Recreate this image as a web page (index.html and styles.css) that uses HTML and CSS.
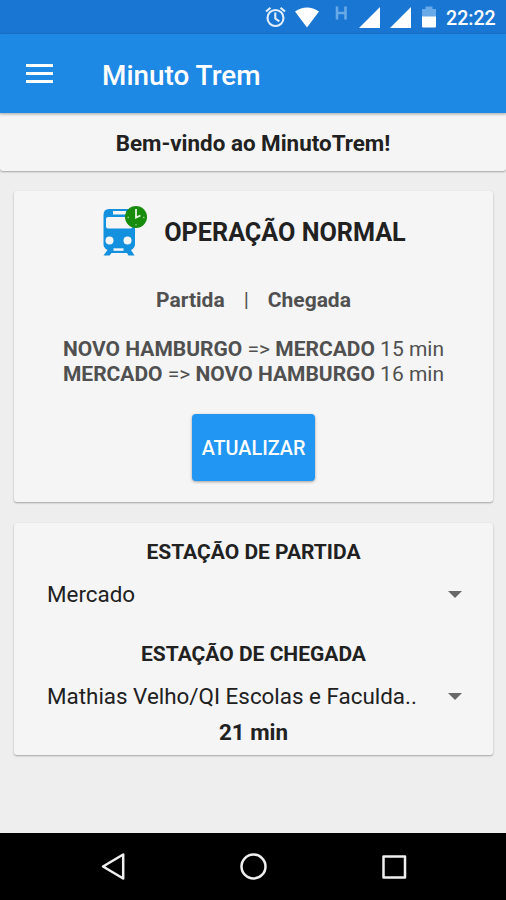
FILE: index.html
```html
<!DOCTYPE html>
<html lang="pt-BR">
<head>
<meta charset="utf-8">
<title>Minuto Trem</title>
<link rel="stylesheet" href="styles.css">
</head>
<body>
<div class="status">
  <svg class="status-icons" width="184" height="34" viewBox="256 0 184 34">
    <g fill="none" stroke="#e4effa" stroke-width="2.100"><circle cx="275.500" cy="18" r="8"/><path d="M275.300 12.500v6l4 2.800M266 11.500l4.500-3.800M285 11.500l-4.500-3.800"/></g>
    <path fill="#fff" d="M295 11.500Q307 3.500 319 11.500L307 27.500Z"/>
    <path fill="none" stroke="#68a9e8" stroke-width="2.600" d="M337 6.500v13M345.500 6.500v13M337 13h8.500"/>
    <path fill="#fff" d="M380 7v21h-21zM411 7v21h-21z"/>
    <path fill="#68a9e8" d="M422 17V9h3.500V6.500h7V9h3.500v8z"/>
    <path fill="#fff" d="M422 16.500h14v10q0 1-1 1h-12q-1 0-1-1z"/>
  </svg>
  <span class="time">22:22</span>
</div>
<header class="appbar">
  <svg class="menu" width="27" height="20" viewBox="0 0 27 20"><path fill="#fff" d="M0 0h27v3H0zM0 8h27v3H0zM0 16h27v3H0z"/></svg>
  <h1 class="title">Minuto Trem</h1>
</header>
<main class="content">
  <section class="welcome">Bem-vindo ao MinutoTrem!</section>
  <section class="card operation">
    <div class="headline">
      <svg class="train" width="48" height="52" viewBox="100 205 48 52">
        <path fill="#1390de" d="M109 209h21q5 0 5 5v30q0 4-4 6l3.500 5.500h-6l-1.500-2.500h-15.500l-2 2.500h-6l4-5.500q-4-2-4-6v-29q0-6 5.500-6z"/>
        <g fill="#f5f5f5"><rect x="113" y="211" width="13" height="3.500"/><rect x="106" y="217" width="26.500" height="11.500" rx="2"/><circle cx="109.500" cy="240.500" r="4"/><circle cx="127.500" cy="240.500" r="4"/><path d="M113.500 248.300h10v2.500h-10z"/></g>
        <circle cx="136" cy="217" r="11" fill="#188c0d"/>
        <path fill="none" stroke="#e8f5e4" stroke-width="1.800" d="M136 209v8.500l4.500-2"/>
        <path fill="none" stroke="#8fc985" stroke-width="1.300" d="M127.500 217.500h1.500M143 217.500h1.500M136 224v1.500"/>
      </svg>
      <h2 class="state">OPERAÇÃO NORMAL</h2>
    </div>
    <div class="columns"><b>Partida</b><span>|</span><b>Chegada</b></div>
    <div class="routes">
      <div><b>NOVO HAMBURGO</b> =&gt; <b>MERCADO</b> 15 min</div>
      <div><b>MERCADO</b> =&gt; <b>NOVO HAMBURGO</b> 16 min</div>
    </div>
    <button class="update">ATUALIZAR</button>
  </section>
  <section class="card stations">
    <h3 class="label">ESTAÇÃO DE PARTIDA</h3>
    <div class="spinner"><span>Mercado</span><i class="arrow"></i></div>
    <h3 class="label second">ESTAÇÃO DE CHEGADA</h3>
    <div class="spinner"><span>Mathias Velho/QI Escolas e Faculda..</span><i class="arrow"></i></div>
    <div class="duration">21 min</div>
  </section>
</main>
<nav class="navbar">
  <svg width="506" height="67" viewBox="0 833 506 67" fill="none" stroke="#f0f0f0" stroke-width="2.500" stroke-linejoin="round"><path d="M123.200 854.500v24L103 866.500z"/><circle cx="253.500" cy="866.500" r="12"/><rect x="383.500" y="856.500" width="21.500" height="21"/></svg>
</nav>
</body>
</html>
```
FILE: styles.css
```css
* { box-sizing: border-box; }
body {
  margin: 0;
  height: 900px;
  display: flex;
  flex-direction: column;
  overflow: hidden;
  background: #eee;
  color: #212121;
  font-family: Roboto, "Liberation Sans", sans-serif;
}
h1, h2, h3 { margin: 0; font-weight: 700; }
b { font-weight: 700; }
.status {
  height: 34px;
  flex: none;
  display: flex;
  justify-content: flex-end;
  align-items: center;
  padding-right: 10px;
  background: #1976d2;
}
.status-icons { margin-right: 6px; }
.time { width: 50px; color: #fff; font-size: 19.6px; font-weight: 500; line-height: 34px; padding-top: 3px; }
.appbar {
  height: 79px;
  flex: none;
  display: flex;
  align-items: center;
  padding-left: 26px;
  background: #1e88e5;
  box-shadow: 0 1px 3px rgba(0, 0, 0, .35);
  z-index: 1;
}
.menu { width: 27px; }
.title { margin: 4px 0 0 49px; color: #fff; font-size: 27.9px; font-weight: 500; line-height: 34px; }
.content { flex: 1; }
.welcome, .card {
  background: #f5f5f5;
  border-radius: 3px;
  box-shadow: 0 1px 2px rgba(0, 0, 0, .32);
}
.welcome { height: 58px; padding-top: 17px; text-align: center; font-size: 22.4px; font-weight: 700; line-height: 26px; }
.card { width: 479px; margin-left: 14px; display: flex; flex-direction: column; align-items: center; }
.operation { height: 311px; margin-top: 20px; padding-top: 14px; }
.headline { display: flex; gap: 16px; margin-left: -1px; }
.state { padding-top: 13px; font-size: 25.2px; line-height: 30px; }
.columns { display: flex; gap: 19px; margin-top: 31px; color: #505050; font-size: 21px; line-height: 25px; }
.routes { margin-top: 24px; color: #505050; font-size: 21px; line-height: 24.6px; white-space: nowrap; }
.update {
  width: 123px;
  height: 67px;
  margin-top: 28px;
  padding: 2px 0 0;
  border: 0;
  border-radius: 4px;
  background: #2196f3;
  box-shadow: 0 1px 3px rgba(0, 0, 0, .35);
  color: #fff;
  font: 500 19.8px Roboto, sans-serif;
}
.stations { height: 232px; margin-top: 21px; padding-top: 17px; }
.label { font-size: 21px; line-height: 25px; }
.spinner {
  width: 100%;
  height: 34px;
  margin-top: 12px;
  display: flex;
  justify-content: space-between;
  padding: 0 31px 0 33px;
  font-size: 22.4px;
  line-height: 34px;
  white-space: nowrap;
}
.arrow { width: 14px; height: 7px; margin-top: 14px; background: #686868; clip-path: polygon(0 0, 100% 0, 50% 100%); }
.second { margin-top: 31px; }
.duration { margin-top: 6px; font-size: 22.4px; font-weight: 700; line-height: 26px; }
.navbar { height: 67px; flex: none; background: #000; }
.navbar svg { display: block; }
```
